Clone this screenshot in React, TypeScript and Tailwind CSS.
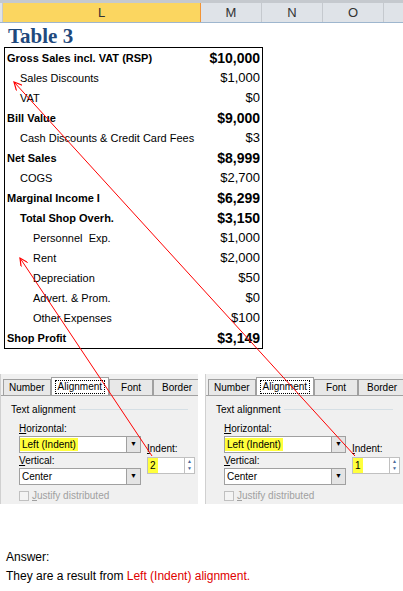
const rows: { label: string; value: string; indent: number; bold: boolean }[] = [
  { label: "Gross Sales incl. VAT (RSP)", value: "$10,000", indent: 0, bold: true },
  { label: "Sales Discounts", value: "$1,000", indent: 1, bold: false },
  { label: "VAT", value: "$0", indent: 1, bold: false },
  { label: "Bill Value", value: "$9,000", indent: 0, bold: true },
  { label: "Cash Discounts & Credit Card Fees", value: "$3", indent: 1, bold: false },
  { label: "Net Sales", value: "$8,999", indent: 0, bold: true },
  { label: "COGS", value: "$2,700", indent: 1, bold: false },
  { label: "Marginal Income I", value: "$6,299", indent: 0, bold: true },
  { label: "Total Shop Overh.", value: "$3,150", indent: 1, bold: true },
  { label: "Personnel  Exp.", value: "$1,000", indent: 2, bold: false },
  { label: "Rent", value: "$2,000", indent: 2, bold: false },
  { label: "Depreciation", value: "$50", indent: 2, bold: false },
  { label: "Advert. & Prom.", value: "$0", indent: 2, bold: false },
  { label: "Other Expenses", value: "$100", indent: 2, bold: false },
  { label: "Shop Profit", value: "$3,149", indent: 0, bold: true },
];

const indentPad = ["pl-[2px]", "pl-[15px]", "pl-[28px]"];

function Dialog({ indent }: { indent: string }) {
  return (
    <div className="w-[198px] h-[130px] bg-[#f0f0f0] border-l border-[#d0d0d0] text-[10px] text-black overflow-hidden">
      <div className="flex items-end h-[22px] pl-[2px] pt-[4px] border-b border-[#a0a0a0] whitespace-nowrap">
        <div className="px-[5px] h-[16px] leading-[16px] border border-b-0 border-[#a0a0a0] bg-[#e8e8e8]">Number</div>
        <div className="px-[3px] h-[18px] flex items-center border border-b-0 border-[#a0a0a0] bg-white">
          <span className="border border-dotted border-black px-[2px] leading-[12px]">Alignment</span>
        </div>
        <div className="px-[11px] h-[16px] leading-[16px] border border-b-0 border-[#a0a0a0] bg-[#e8e8e8]">Font</div>
        <div className="px-[8px] h-[16px] leading-[16px] border border-b-0 border-[#a0a0a0] bg-[#e8e8e8]">Border</div>
      </div>
      <div className="px-[10px] pt-[6px]">
        <div className="flex items-center gap-[4px]">
          <span>Text alignment</span>
          <div className="flex-1 h-px bg-[#d5dfe5]" />
        </div>
        <div className="pl-[8px] pt-[6px] flex gap-[6px]">
          <div>
            <div className="leading-[12px]"><span className="underline">H</span>orizontal:</div>
            <div className="mt-[1px] w-[122px] h-[17px] bg-white border border-[#a0a0a0] flex items-center justify-between">
              <span className="bg-[#ffff3c] px-[2px] h-[13px] leading-[13px]">Left (Indent)</span>
              <span className="w-[14px] h-[15px] bg-[#e4e4e4] border-l border-[#a0a0a0] flex items-center justify-center text-[7px]">▼</span>
            </div>
            <div className="mt-[2px] leading-[12px]"><span className="underline">V</span>ertical:</div>
            <div className="mt-[1px] w-[122px] h-[17px] bg-white border border-[#a0a0a0] flex items-center justify-between pl-[2px]">
              <span>Center</span>
              <span className="w-[14px] h-[15px] bg-[#e4e4e4] border-l border-[#a0a0a0] flex items-center justify-center text-[7px]">▼</span>
            </div>
            <div className="mt-[3px] flex items-center gap-[3px] text-[#a0a0a0]">
              <span className="w-[10px] h-[10px] border border-[#c0c0c0] bg-[#f4f4f4]" />
              <span><span className="underline">J</span>ustify distributed</span>
            </div>
          </div>
          <div className="pt-[20px]">
            <div className="leading-[12px]"><span className="underline">I</span>ndent:</div>
            <div className="mt-[2px] w-[48px] h-[17px] bg-white border border-[#c0c0c0] flex items-center justify-between">
              <span className="bg-[#ffff3c] px-[2px] h-[15px] leading-[15px]">{indent}</span>
              <span className="w-[10px] h-[15px] flex flex-col text-[5px] text-[#4a6a9a] border-l border-[#c0c0c0] leading-[7px] items-center">
                <span>▲</span><span>▼</span>
              </span>
            </div>
          </div>
        </div>
      </div>
    </div>
  );
}

export default function App() {
  return (
    <div className="relative w-[403px] h-[591px] bg-white font-[family-name:Liberation_Sans,Arial,sans-serif] overflow-hidden">
      {/* column header */}
      <div className="flex h-[23px] bg-[#dfe3e8] border-t-[3px] border-[#c5c9ce] border-b border-b-[#9eb6ce] text-[13px] text-[#333]">
        <div className="w-[3px] border-r border-[#c5c9ce]" />
        <div className="w-[198px] bg-[#fbd660] border-r border-[#f29436] flex items-center justify-center">L</div>
        <div className="w-[61px] border-r border-[#c5c9ce] flex items-center justify-center">M</div>
        <div className="w-[61px] border-r border-[#c5c9ce] flex items-center justify-center">N</div>
        <div className="w-[61px] border-r border-[#c5c9ce] flex items-center justify-center">O</div>
      </div>

      <div className="pl-[8px] pt-[2px] h-[24px] font-[family-name:Liberation_Serif,serif] font-bold text-[21px] leading-[22px] text-[#1f497d]">
        Table 3
      </div>

      <div className="ml-[4px] w-[259px] border-[1.5px] border-black">
        {rows.map((r) => (
          <div key={r.label} className="flex items-center justify-between h-[20px] pr-[2px] text-black">
            <span className={`${indentPad[r.indent]} text-[11px] whitespace-pre ${r.bold ? "font-bold" : ""}`}>{r.label}</span>
            <span className={r.bold ? "text-[14px] font-bold" : "text-[13px]"}>{r.value}</span>
          </div>
        ))}
      </div>

      <div className="mt-[25px] flex justify-between">
        <Dialog indent="2" />
        <Dialog indent="1" />
      </div>

      <div className="pl-[6px] pt-[44px] text-[12px] leading-[19px] text-black">
        <div>Answer:</div>
        <div>
          They are a result from <span className="text-[#e00000]">Left (Indent) alignment.</span>
        </div>
      </div>

      {/* annotation arrows */}
      <svg className="absolute left-0 top-0 pointer-events-none" width="403" height="591">
        <defs>
          <marker id="ah" markerWidth="10" markerHeight="8" refX="8" refY="4" orient="auto" markerUnits="userSpaceOnUse">
            <path d="M0,0 L8,4 L0,8" fill="none" stroke="#ff0000" strokeWidth="1.2" />
          </marker>
        </defs>
        <line x1="355" y1="456" x2="14" y2="82" stroke="#ff0000" strokeWidth="1" markerEnd="url(#ah)" />
        <line x1="152" y1="456" x2="20" y2="258" stroke="#ff0000" strokeWidth="1" markerEnd="url(#ah)" />
      </svg>
    </div>
  );
}
